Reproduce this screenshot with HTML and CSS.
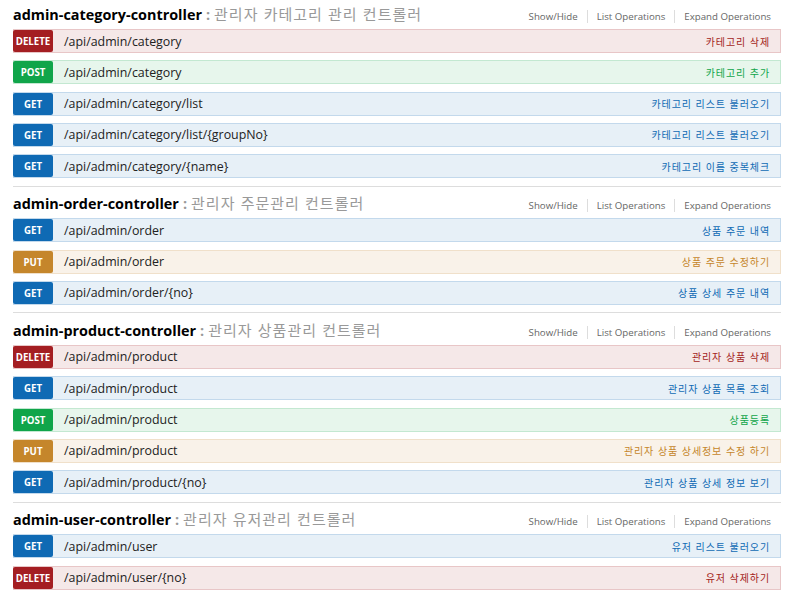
FILE: index.html
```html
<!DOCTYPE html>
<html lang="ko">
<head>
<meta charset="utf-8">
<title>Swagger</title>
<link rel="stylesheet" href="styles.css">
</head>
<body>
<div class="resources">
  <section class="resource">
    <div class="res-heading">
      <h2><span class="res-name">admin-category-controller</span><span class="colon">:</span><span class="res-desc">관리자 카테고리 관리 컨트롤러</span></h2>
      <ul class="options"><li>Show/Hide</li><li>List Operations</li><li>Expand Operations</li></ul>
    </div>
    <ul class="ops">
      <li class="op delete"><span class="method">DELETE</span><span class="path">/api/admin/category</span><span class="summary">카테고리 삭제</span></li>
      <li class="op post"><span class="method">POST</span><span class="path">/api/admin/category</span><span class="summary">카테고리 추가</span></li>
      <li class="op get"><span class="method">GET</span><span class="path">/api/admin/category/list</span><span class="summary">카테고리 리스트 불러오기</span></li>
      <li class="op get"><span class="method">GET</span><span class="path">/api/admin/category/list/{groupNo}</span><span class="summary">카테고리 리스트 불러오기</span></li>
      <li class="op get"><span class="method">GET</span><span class="path">/api/admin/category/{name}</span><span class="summary">카테고리 이름 중복체크</span></li>
    </ul>
  </section>
  <section class="resource">
    <div class="res-heading">
      <h2><span class="res-name">admin-order-controller</span><span class="colon">:</span><span class="res-desc">관리자 주문관리 컨트롤러</span></h2>
      <ul class="options"><li>Show/Hide</li><li>List Operations</li><li>Expand Operations</li></ul>
    </div>
    <ul class="ops">
      <li class="op get"><span class="method">GET</span><span class="path">/api/admin/order</span><span class="summary">상품 주문 내역</span></li>
      <li class="op put"><span class="method">PUT</span><span class="path">/api/admin/order</span><span class="summary">상품 주문 수정하기</span></li>
      <li class="op get"><span class="method">GET</span><span class="path">/api/admin/order/{no}</span><span class="summary">상품 상세 주문 내역</span></li>
    </ul>
  </section>
  <section class="resource">
    <div class="res-heading">
      <h2><span class="res-name">admin-product-controller</span><span class="colon">:</span><span class="res-desc">관리자 상품관리 컨트롤러</span></h2>
      <ul class="options"><li>Show/Hide</li><li>List Operations</li><li>Expand Operations</li></ul>
    </div>
    <ul class="ops">
      <li class="op delete"><span class="method">DELETE</span><span class="path">/api/admin/product</span><span class="summary">관리자 상품 삭제</span></li>
      <li class="op get"><span class="method">GET</span><span class="path">/api/admin/product</span><span class="summary">관리자 상품 목록 조회</span></li>
      <li class="op post"><span class="method">POST</span><span class="path">/api/admin/product</span><span class="summary">상품등록</span></li>
      <li class="op put"><span class="method">PUT</span><span class="path">/api/admin/product</span><span class="summary">관리자 상품 상세정보 수정 하기</span></li>
      <li class="op get"><span class="method">GET</span><span class="path">/api/admin/product/{no}</span><span class="summary">관리자 상품 상세 정보 보기</span></li>
    </ul>
  </section>
  <section class="resource">
    <div class="res-heading">
      <h2><span class="res-name">admin-user-controller</span><span class="colon">:</span><span class="res-desc">관리자 유저관리 컨트롤러</span></h2>
      <ul class="options"><li>Show/Hide</li><li>List Operations</li><li>Expand Operations</li></ul>
    </div>
    <ul class="ops">
      <li class="op get"><span class="method">GET</span><span class="path">/api/admin/user</span><span class="summary">유저 리스트 불러오기</span></li>
      <li class="op delete"><span class="method">DELETE</span><span class="path">/api/admin/user/{no}</span><span class="summary">유저 삭제하기</span></li>
    </ul>
  </section>
</div>
</body>
</html>
```

FILE: styles.css
```css
html, body {
  margin: 0;
  padding: 0;
  background: #fff;
}
body {
  font-family: "Open Sans", "Noto Sans CJK KR", sans-serif;
  color: #000;
  overflow: hidden;
}
.resources {
  margin-top: -2.67px;
  padding: 0 9px 0 13px;
}
.resource {
  border-bottom: 1px solid #ddd;
}
.res-heading {
  display: flex;
  align-items: center;
  height: 31.67px;
}
.res-heading h2 {
  margin: 0;
  flex: 1;
  display: flex;
  align-items: baseline;
  white-space: nowrap;
}
.res-name {
  font-size: 14.4px;
  font-weight: bold;
  color: #000;
}
.colon {
  font-size: 14.4px;
  font-weight: bold;
  color: #999;
  margin: 0 4px 0 4px;
}
.res-desc {
  font-family: "Noto Sans CJK KR", sans-serif;
  font-size: 15px;
  font-weight: normal;
  letter-spacing: 1px;
  color: #999;
}
.options {
  list-style: none;
  margin: 6px 0 0 0;
  padding: 0;
  display: flex;
}
.options li {
  font-size: 9.7px;
  line-height: 13px;
  color: #666;
  padding: 0 9px;
}
.options li + li {
  border-left: 1px solid #ddd;
}
.options li:last-child {
  padding-right: 10px;
}
.ops {
  list-style: none;
  margin: 0;
  padding: 0;
}
.op {
  display: flex;
  align-items: center;
  height: 22px;
  border: 1px solid;
  margin-bottom: 7.33px;
}
.method {
  align-self: stretch;
  width: 40px;
  margin-left: -1px;
  display: flex;
  align-items: center;
  justify-content: center;
  padding-top: 1px;
  box-sizing: border-box;
  color: #fff;
  font-size: 9.7px;
  font-weight: bold;
  border-radius: 2px;
}
.path {
  padding-left: 11px;
  font-size: 12.4px;
  color: #222;
}
.summary {
  margin-left: auto;
  padding-right: 10px;
  font-family: "Noto Sans CJK KR", sans-serif;
  font-size: 10px;
  letter-spacing: 0.9px;
}
.get { background: #e7f0f7; border-color: #c3d9ec; }
.get .method { background: #0f6ab4; }
.get .summary { color: #0f6ab4; }
.post { background: #e7f6ec; border-color: #c3e8d1; }
.post .method { background: #10a54a; }
.post .summary { color: #10a54a; }
.put { background: #f9f2e9; border-color: #f0e0ca; }
.put .method { background: #c5862b; }
.put .summary { color: #c5862b; }
.delete { background: #f5e8e8; border-color: #e8c6c7; }
.delete .method { background: #a41e22; }
.delete .summary { color: #a41e22; }
```
